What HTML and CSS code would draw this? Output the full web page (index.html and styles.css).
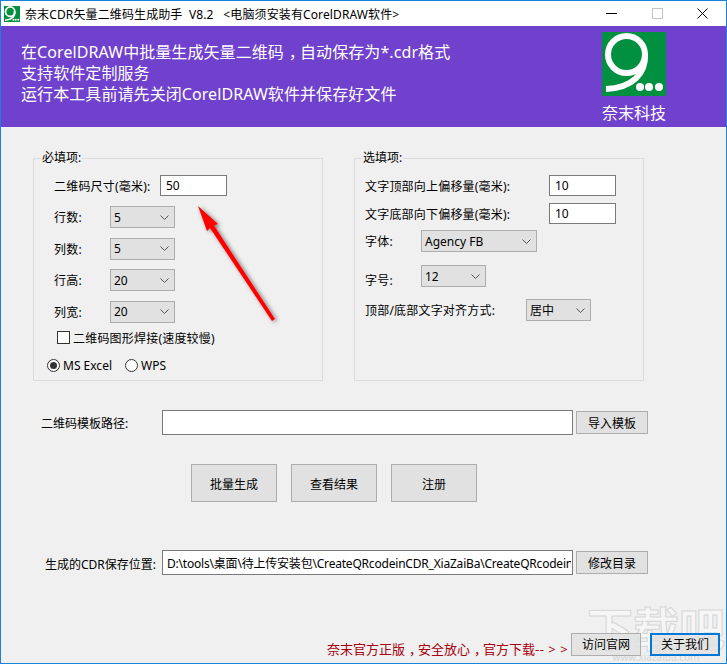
FILE: index.html
```html
<!DOCTYPE html>
<html lang="zh-CN">
<head>
    <meta charset="UTF-8">
    <title>奈末CDR矢量二维码生成助手</title>
    <link rel="stylesheet" href="styles.css">
</head>
<body>
    <div class="window">
        <div class="titlebar">
            <svg class="app-icon" width="16" height="16" viewBox="0 0 64 64">
                <rect width="64" height="64" fill="#00903f"/>
                <circle cx="24.500" cy="22.500" r="18.500" fill="none" stroke="#fff" stroke-width="7"/>
                <path d="M43 22C44 42 30 56 4 57" fill="none" stroke="#fff" stroke-width="7"/>
                <circle cx="38" cy="55" r="4" fill="#fff"/>
                <circle cx="47" cy="55" r="4" fill="#fff"/>
                <circle cx="57" cy="55" r="4" fill="#fff"/>
            </svg>
            <span class="title-text">奈末CDR矢量二维码生成助手&nbsp; V8.2 &nbsp; &lt;电脑须安装有CorelDRAW软件&gt;</span>
            <div class="caption-btns">
                <svg width="11" height="11" viewBox="0 0 11 11"><path d="M0 5.500h11" stroke="#000"/></svg>
                <svg width="11" height="11" viewBox="0 0 11 11"><rect x=".5" y=".5" width="10" height="10" fill="none" stroke="#c4c4c4"/></svg>
                <svg width="11" height="11" viewBox="0 0 11 11"><path d="M.5 .5l10 10M10.500 .5l-10 10" stroke="#000" stroke-width="1"/></svg>
            </div>
        </div>

        <div class="banner">
            <div class="banner-text">
                <p>在CorelDRAW中批量生成矢量二维码<span class="comma">，</span>自动保存为*.cdr格式</p>
                <p>支持软件定制服务</p>
                <p>运行本工具前请先关闭CorelDRAW软件并保存好文件</p>
            </div>
            <div class="brand">
                <svg class="logo" width="64" height="64" viewBox="0 0 64 64">
                    <rect width="64" height="64" fill="#00903f"/>
                    <circle cx="24.500" cy="22.500" r="18.500" fill="none" stroke="#fff" stroke-width="6"/>
                    <path d="M43 22C44 42 30 56 4 57" fill="none" stroke="#fff" stroke-width="6"/>
                    <circle cx="38" cy="55" r="4" fill="#fff"/>
                    <circle cx="47" cy="55" r="4" fill="#fff"/>
                    <circle cx="57" cy="55" r="4" fill="#fff"/>
                </svg>
                <span>奈末科技</span>
            </div>
        </div>

        <div class="content">
            <div class="groups">
                <fieldset class="group">
                    <legend>必填项:</legend>
                    <div class="row first-row">
                        <label class="label-size">二维码尺寸(毫米):</label>
                        <input class="field short" type="text" value="50">
                    </div>
                    <div class="combo-rows">
                        <div class="row"><label class="label-small">行数:</label><div class="combo small"><span>5</span><svg width="9" height="5" viewBox="0 0 9 5"><path d="M.5 .5l4 4 4-4" fill="none" stroke="#555"/></svg></div></div>
                        <div class="row"><label class="label-small">列数:</label><div class="combo small"><span>5</span><svg width="9" height="5" viewBox="0 0 9 5"><path d="M.5 .5l4 4 4-4" fill="none" stroke="#555"/></svg></div></div>
                        <div class="row"><label class="label-small">行高:</label><div class="combo small"><span>20</span><svg width="9" height="5" viewBox="0 0 9 5"><path d="M.5 .5l4 4 4-4" fill="none" stroke="#555"/></svg></div></div>
                        <div class="row"><label class="label-small">列宽:</label><div class="combo small"><span>20</span><svg width="9" height="5" viewBox="0 0 9 5"><path d="M.5 .5l4 4 4-4" fill="none" stroke="#555"/></svg></div></div>
                    </div>
                    <div class="check-row"><span class="checkbox"></span>二维码图形焊接(速度较慢)</div>
                    <div class="radio-row">
                        <span class="radio checked"></span><span class="radio-label">MS Excel</span>
                        <span class="radio"></span><span>WPS</span>
                    </div>
                </fieldset>

                <fieldset class="group">
                    <legend>选填项:</legend>
                    <div class="row first-row offset-row">
                        <label>文字顶部向上偏移量(毫米):</label>
                        <input class="field short" type="text" value="10">
                    </div>
                    <div class="row second-row offset-row">
                        <label>文字底部向下偏移量(毫米):</label>
                        <input class="field short" type="text" value="10">
                    </div>
                    <div class="row font-row">
                        <label class="label-font">字体:</label>
                        <div class="combo wide"><span>Agency FB</span><svg width="9" height="5" viewBox="0 0 9 5"><path d="M.5 .5l4 4 4-4" fill="none" stroke="#555"/></svg></div>
                    </div>
                    <div class="row size-row">
                        <label class="label-font low">字号:</label>
                        <div class="combo small"><span>12</span><svg width="9" height="5" viewBox="0 0 9 5"><path d="M.5 .5l4 4 4-4" fill="none" stroke="#555"/></svg></div>
                    </div>
                    <div class="row align-row">
                        <label class="label-align">顶部/底部文字对齐方式:</label>
                        <div class="combo small"><span>居中</span><svg width="9" height="5" viewBox="0 0 9 5"><path d="M.5 .5l4 4 4-4" fill="none" stroke="#555"/></svg></div>
                    </div>
                </fieldset>
            </div>

            <div class="path-row template-row">
                <label class="label-template">二维码模板路径:</label>
                <input class="field path" type="text" value="">
                <button class="btn side">导入模板</button>
            </div>

            <div class="actions">
                <button class="btn big">批量生成</button>
                <button class="btn big">查看结果</button>
                <button class="btn big">注册</button>
            </div>

            <div class="path-row save-row">
                <label class="label-save">生成的CDR保存位置:</label>
                <input class="field path save-path" type="text" value="D:\tools\桌面\待上传安装包\CreateQRcodeinCDR_XiaZaiBa\CreateQRcodeinCDR">
                <button class="btn side">修改目录</button>
            </div>

            <div class="footer">
                <span class="notice">奈末官方正版<span class="comma">，</span>安全放心<span class="comma">，</span>官方下载<span class="dashes">-- &gt; &gt;</span></span>
                <button class="btn foot">访问官网</button>
                <button class="btn foot focused">关于我们</button>
            </div>
        </div>

        <!-- annotation on top of the screenshot -->
        <svg class="arrow" width="100" height="130" viewBox="0 0 100 130">
            <defs>
                <filter id="arrowShadow" x="-30%" y="-30%" width="160%" height="160%">
                    <feDropShadow dx="2" dy="1" stdDeviation="2" flood-color="#000" flood-opacity="0.5"/>
                </filter>
            </defs>
            <path d="M8 6 L28 24 L24 25.500 L85 119 L82 121 L20 28 L17 31 Z" fill="#f00" filter="url(#arrowShadow)"/>
        </svg>

        <div class="watermark">
            <span class="wm-big">下载吧</span>
            <span class="wm-url">www.xiazaiba.com</span>
        </div>
    </div>
</body>
</html>
```

FILE: styles.css
```css
* {
    box-sizing: border-box;
}

html, body {
    margin: 0;
    padding: 0;
}

body {
    width: 727px;
    height: 664px;
    overflow: hidden;
    font-family: "Noto Sans", "Noto Sans CJK SC", sans-serif;
    font-size: 12px;
    color: #000;
}

.window {
    position: relative;
    width: 727px;
    height: 664px;
    border: 1px solid #1883d7;
    background: #f0f0f0;
    overflow: hidden;
}

.titlebar {
    display: flex;
    align-items: center;
    height: 25px;
    padding-left: 3px;
    background: #fff;
}

.app-icon {
    margin-right: 5px;
}

.title-text {
    flex: 1;
    font-size: 12px;
    letter-spacing: .12px;
}

.caption-btns {
    display: flex;
    gap: 34.500px;
    padding-right: 18px;
}

.banner {
    display: flex;
    justify-content: space-between;
    height: 101px;
    padding: 6px 0 0 20px;
    background: #7041cd;
    color: #fff;
}

.banner-text {
    padding-top: 10px;
    font-size: 16px;
    line-height: 21px;
    letter-spacing: .08px;
}

.banner-text p {
    margin: 0;
}

/* the comma sits in the middle of its cell in the original font */
.comma {
    padding-left: .3em;
    margin-right: -.3em;
}

.brand {
    display: flex;
    flex-direction: column;
    align-items: center;
    width: 64px;
    margin-right: 60px;
    font-size: 16px;
    line-height: 22px;
}

.logo {
    flex: none;
    margin-bottom: 6px;
}

.content {
    padding: 0 6px 0 32px;
}

.groups {
    display: flex;
    gap: 31px;
    padding-top: 23px;
}

.group {
    position: relative;
    width: 290px;
    height: 231px;
    margin: 0;
    padding: 0;
    border: 1px solid #dcdcdc;
}

.group legend {
    margin-left: 7px;
    padding: 0 1px;
    font-size: 12px;
    line-height: 16px;
}

.row {
    display: flex;
    align-items: center;
    letter-spacing: .2px;
}

.first-row {
    margin-top: 9px;
    padding-left: 20px;
}

.label-size {
    width: 106px;
}

.field {
    height: 21px;
    padding: 0 5px;
    border: 1px solid #7a7a7a;
    background: #fff;
    font: inherit;
    color: #000;
    outline: none;
}

.short {
    width: 67px;
}

.combo-rows {
    display: flex;
    flex-direction: column;
    gap: 9.670px;
    margin-top: 10px;
    padding-left: 20px;
}

.label-small {
    width: 56px;
}

.combo {
    display: flex;
    align-items: center;
    justify-content: space-between;
    height: 22px;
    padding: 0 5px 0 3px;
    border: 1px solid #adadad;
    background: #e1e1e1;
    letter-spacing: 0;
}

.small {
    width: 65px;
}

.wide {
    width: 116px;
}

.check-row {
    display: flex;
    align-items: center;
    gap: 3px;
    height: 16px;
    margin: 7px 0 0 23px;
    letter-spacing: .2px;
}

.checkbox {
    width: 13px;
    height: 13px;
    border: 1px solid #333;
    background: #fff;
}

.radio-row {
    display: flex;
    align-items: center;
    height: 16px;
    margin: 12px 0 0 13px;
}

.radio {
    position: relative;
    width: 13px;
    height: 13px;
    margin-right: 3px;
    border: 1px solid #333;
    border-radius: 50%;
    background: #fff;
}

.radio.checked::after {
    content: "";
    position: absolute;
    top: 2px;
    left: 2px;
    width: 7px;
    height: 7px;
    border-radius: 50%;
    background: #333;
}

.radio-label {
    width: 62px;
}

.offset-row {
    justify-content: space-between;
    padding: 0 27px 0 10px;
}

.second-row {
    margin-top: 7px;
}

.font-row {
    margin-top: 6px;
    padding-left: 10px;
}

.label-font {
    width: 56px;
}

.label-font.low {
    padding-top: 8px;
}

.size-row {
    margin-top: 11px;
    padding-left: 10px;
}

.align-row {
    margin-top: 10px;
    padding-left: 10px;
}

.label-align {
    width: 161px;
}

.path-row {
    display: flex;
    align-items: center;
}

.template-row {
    margin-top: 29px;
}

.label-template {
    width: 129px;
    padding-left: 8px;
}

.path {
    width: 411px;
    height: 25px;
    padding: 0 1px 0 4px;
}

.save-path {
    letter-spacing: -.2px;
}

.btn {
    padding: 0;
    border: 1px solid #adadad;
    background: #e1e1e1;
    font: inherit;
    color: #000;
}

.side {
    width: 72px;
    height: 23px;
    margin-left: 3px;
    padding-top: 1px;
}

.actions {
    display: flex;
    gap: 14px;
    margin: 29px 0 0 158px;
}

.big {
    width: 86px;
    height: 38px;
    padding-top: 2px;
}

.save-row {
    margin-top: 48px;
}

.label-save {
    width: 129px;
    padding: 3px 0 0 12px;
}

.footer {
    position: relative;
    z-index: 1;
    display: flex;
    align-items: center;
    margin-top: 55px;
    padding-left: 294px;
}

.notice {
    flex: none;
    width: 244px;
    padding-top: 9px;
    font-size: 13px;
    white-space: nowrap;
    color: #a5000f;
}

.dashes {
    letter-spacing: .5px;
}

.foot {
    width: 70px;
    height: 23px;
    background: rgba(225, 225, 225, .8);
}

.foot + .foot {
    margin-left: 9px;
}

.focused {
    border: 2px solid #0078d7;
}

.arrow {
    position: absolute;
    top: 199px;
    left: 189px;
}

.watermark {
    position: absolute;
    right: 1px;
    bottom: 0;
    display: flex;
    flex-direction: column;
    align-items: center;
    pointer-events: none;
}

.wm-big {
    font-size: 46px;
    font-weight: 700;
    line-height: 47px;
    color: #f6f6f6;
    -webkit-text-stroke: 1px #d6d6d6;
}

.wm-url {
    font-size: 10px;
    line-height: 11px;
    color: #d6d6d6;
}
```
